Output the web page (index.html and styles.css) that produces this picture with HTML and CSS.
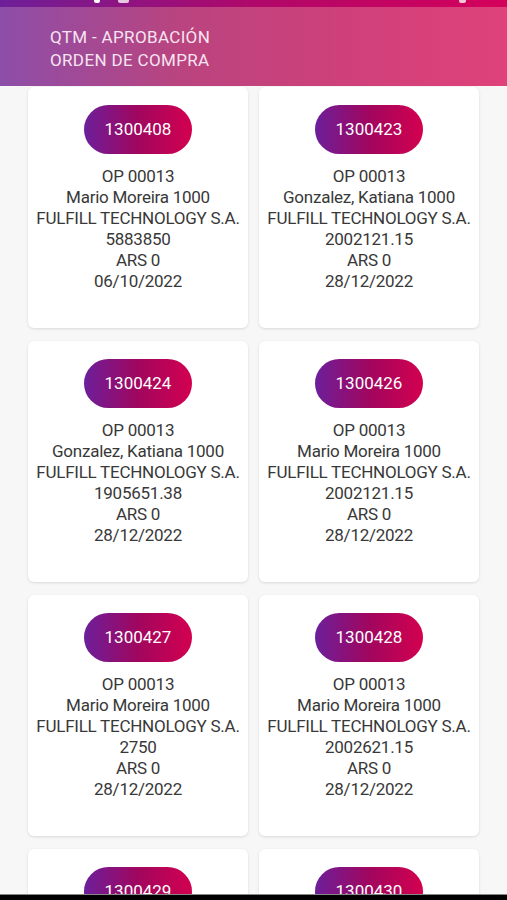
FILE: index.html
```html
<!DOCTYPE html>
<html lang="es">

<head>
  <meta charset="UTF-8">
  <meta name="viewport" content="width=device-width, initial-scale=1.0">
  <title>QTM - Aprobación Orden de Compra</title>

  <link rel="stylesheet" href="styles.css">
</head>

<body>
  <div class="status-bar">
    <span class="st-icon st-a"></span>
    <span class="st-icon st-b"></span>
    <span class="st-icon st-c"></span>
  </div>

  <header class="app-header">
    <h1>QTM - APROBACIÓN<br>ORDEN DE COMPRA</h1>
  </header>

  <main class="orden-list">
    <div class="orden-card">
      <div class="orden-nro">1300408</div>
      <p>OP 00013<br>Mario Moreira 1000<br>FULFILL TECHNOLOGY S.A.<br>5883850<br>ARS 0<br>06/10/2022</p>
    </div>
    <div class="orden-card">
      <div class="orden-nro">1300423</div>
      <p>OP 00013<br>Gonzalez, Katiana 1000<br>FULFILL TECHNOLOGY S.A.<br>2002121.15<br>ARS 0<br>28/12/2022</p>
    </div>
    <div class="orden-card">
      <div class="orden-nro">1300424</div>
      <p>OP 00013<br>Gonzalez, Katiana 1000<br>FULFILL TECHNOLOGY S.A.<br>1905651.38<br>ARS 0<br>28/12/2022</p>
    </div>
    <div class="orden-card">
      <div class="orden-nro">1300426</div>
      <p>OP 00013<br>Mario Moreira 1000<br>FULFILL TECHNOLOGY S.A.<br>2002121.15<br>ARS 0<br>28/12/2022</p>
    </div>
    <div class="orden-card">
      <div class="orden-nro">1300427</div>
      <p>OP 00013<br>Mario Moreira 1000<br>FULFILL TECHNOLOGY S.A.<br>2750<br>ARS 0<br>28/12/2022</p>
    </div>
    <div class="orden-card">
      <div class="orden-nro">1300428</div>
      <p>OP 00013<br>Mario Moreira 1000<br>FULFILL TECHNOLOGY S.A.<br>2002621.15<br>ARS 0<br>28/12/2022</p>
    </div>
    <div class="orden-card">
      <div class="orden-nro">1300429</div>
    </div>
    <div class="orden-card">
      <div class="orden-nro">1300430</div>
    </div>
  </main>

  <div class="nav-bar"></div>
</body>

</html>
```

FILE: styles.css
```css
* {
  margin: 0;
  padding: 0;
  box-sizing: border-box;
}

body {
  width: 507px;
  height: 900px;
  overflow: hidden;
  background: #f7f7f7;
  font-family: Roboto, 'Noto Sans', sans-serif;
  color: #333;
}

.status-bar {
  position: relative;
  height: 7px;
  background: linear-gradient(to right, #6d1f98, #b0086a 50%, #d4005a);
}

.st-icon {
  position: absolute;
  top: 0;
  height: 3px;
  background: #fff;
  border-radius: 0 0 2px 2px;
}

.st-a {
  left: 94px;
  width: 6px;
}

.st-b {
  left: 118px;
  width: 11px;
  background: #e8c8e0;
}

.st-c {
  left: 459px;
  width: 7px;
  background: #f3c6d8;
}

.app-header {
  height: 79px;
  padding: 19px 0 0 50px;
  background: linear-gradient(to right, #8d4ea9, #b9447f 35%, #d0407a 70%, #df427a);
}

.app-header h1 {
  font-weight: normal;
  font-size: 17px;
  line-height: 23px;
  letter-spacing: .35px;
  color: #f7e4f0;
}

.orden-list {
  display: grid;
  grid-template-columns: 220px 220px;
  column-gap: 11px;
  row-gap: 13px;
  height: 808px;
  overflow: hidden;
  padding: 1px 28px 0;
}

.orden-card {
  height: 241px;
  padding-top: 18px;
  background: #fff;
  border-radius: 6px;
  box-shadow: 0 1px 3px rgba(0, 0, 0, .12);
  display: flex;
  flex-direction: column;
  align-items: center;
  text-align: center;
}

.orden-nro {
  flex: none;
  width: 108px;
  height: 49px;
  border-radius: 25px;
  background: linear-gradient(to right, #6c1f9a, #a1065f 50%, #d3004f);
  color: #fff;
  font-size: 17px;
  line-height: 49px;
}

.orden-card p {
  margin-top: 12px;
  font-size: 17px;
  line-height: 21px;
  letter-spacing: -.25px;
  color: #383838;
  white-space: nowrap;
}

.nav-bar {
  position: fixed;
  left: 0;
  right: 0;
  bottom: 0;
  height: 6px;
  background: #000;
  border-top: 1px solid #888;
}
```
